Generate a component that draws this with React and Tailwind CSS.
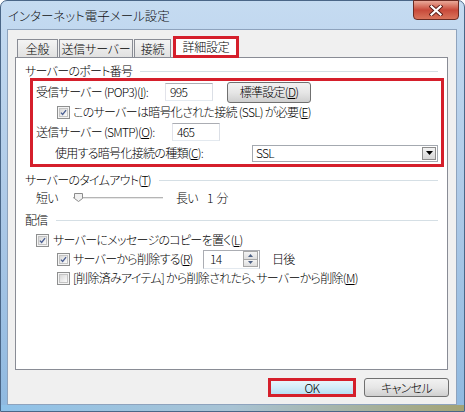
import React from "react";

const Check = ({ checked }) => (
  <div className="w-[13px] h-[13px] shrink-0 border border-[#8e8f8f] bg-[#f4f4f4] p-px">
    <div className="w-full h-full border border-[#c4c4c4] bg-gradient-to-br from-[#d8d8d8] to-[#fbfbfb] flex items-center justify-center">
      {checked && (
        <svg width="9" height="9" viewBox="0 0 9 9">
          <path d="M1.2 4.6 L3.4 7 L7.8 1.4" fill="none" stroke="#4a5e92" strokeWidth="1.7" />
        </svg>
      )}
    </div>
  </div>
);

const GroupLabel = ({ children, cls }) => (
  <div className={"flex items-center pl-[9px] pr-[9px] h-[14px] " + cls}>
    <span className="leading-[14px] whitespace-nowrap">{children}</span>
    <div className="flex-1 h-px bg-[#d5dfe5] ml-[8px]" />
  </div>
);

const TextBox = ({ value, cls }) => (
  <div className={"border border-[#abadb3] border-l-[#e2e3ea] border-r-[#dbdfe6] border-b-[#e3e9ef] bg-white flex items-center pl-[4px] text-[12px] leading-none " + cls}>
    {value}
  </div>
);

export default function App() {
  return (
    <div className="w-[465px] h-[412px] overflow-hidden font-['Noto_Sans_CJK_JP',sans-serif] font-light [font-feature-settings:'palt'] tracking-[-0.7px] text-[12px] text-black">
      <div className="w-[465px] h-[412px] rounded-t-[7px] border border-[#4a6687] bg-gradient-to-b from-[#c5dbf1] via-[#adc9e7] to-[#8fb9e0] flex flex-col">
        {/* title bar */}
        <div className="h-[28px] flex items-start justify-between shrink-0">
          <div className="pl-[7px] pt-[6px] text-[12.5px] leading-[18px] text-[#111] tracking-normal">インターネット電子メール設定</div>
          <div className="mr-[5px] -mt-px w-[46px] h-[20px] rounded-b-[4px] border border-[#6b2b23] bg-gradient-to-b from-[#e9a999] via-[#c8493a] to-[#d9745c] flex items-center justify-center">
            <svg width="14" height="11" viewBox="0 0 14 11">
              <path d="M2.5 1.5 L11.5 9.5 M11.5 1.5 L2.5 9.5" stroke="#5a1c16" strokeWidth="4" strokeLinecap="square" />
              <path d="M2.5 1.5 L11.5 9.5 M11.5 1.5 L2.5 9.5" stroke="#ffffff" strokeWidth="2.2" strokeLinecap="square" />
            </svg>
          </div>
        </div>
        {/* client */}
        <div className="ml-[6px] mr-[7px] h-[376px] border border-[#8ea3bd] bg-[#f0f0f0] flex flex-col shrink-0">
          {/* tabs */}
          <div className="flex items-end h-[27px] pl-[9px] relative z-10 tracking-[-0.2px]">
            <div className="w-[41px] h-[18px] border border-[#898c95] border-b-0 bg-gradient-to-b from-[#f4f4f4] to-[#e1e1e1] flex items-center justify-center leading-none">全般</div>
            <div className="ml-px w-[74px] h-[18px] border border-[#898c95] border-b-0 bg-gradient-to-b from-[#f4f4f4] to-[#e1e1e1] flex items-center justify-center leading-none">送信サーバー</div>
            <div className="ml-px w-[37px] h-[18px] border border-[#898c95] border-b-0 bg-gradient-to-b from-[#f4f4f4] to-[#e1e1e1] flex items-center justify-center leading-none">接続</div>
            <div className="ml-[2px] w-[66px] h-[22px] -mb-px border-[3px] border-[#d51f2b] bg-white flex items-center justify-center leading-none">詳細設定</div>
          </div>
          {/* panel */}
          <div className="ml-[7px] w-[433px] h-[313px] border border-[#898c95] bg-white flex flex-col">
            <GroupLabel cls="mt-[6px]">サーバーのポート番号</GroupLabel>
            <div className="ml-[14px] mr-[3px] h-[89px] border-[3px] border-[#d51f2b] flex flex-col">
              <div className="h-[22px] flex items-center pl-[3px]">
                <span className="w-[129px] whitespace-nowrap">受信サーバー (POP3)(<u>I</u>):</span>
                <TextBox value="995" cls="w-[48px] h-[18px]" />
                <div className="ml-[14px] w-[84px] h-[21px] rounded-[3px] border border-[#707070] bg-gradient-to-b from-[#f2f2f2] via-[#e6e6e6] to-[#cfcfcf] flex items-center justify-center leading-none">標準設定(<u>D</u>)</div>
              </div>
              <div className="h-[18px] flex items-center pl-[24px]">
                <Check checked />
                <span className="ml-[3px] whitespace-nowrap">このサーバーは暗号化された接続 (SSL) が必要(<u>E</u>)</span>
              </div>
              <div className="h-[21px] flex items-center pl-[3px]">
                <span className="w-[136px] whitespace-nowrap">送信サーバー (SMTP)(<u>O</u>):</span>
                <TextBox value="465" cls="w-[48px] h-[18px]" />
              </div>
              <div className="h-[22px] flex items-center pl-[22px]">
                <span className="w-[197px] whitespace-nowrap">使用する暗号化接続の種類(<u>C</u>):</span>
                <div className="w-[186px] h-[17px] border border-[#a4a9b0] bg-white flex items-center justify-between pl-[3px] pr-px">
                  <span className="leading-none">SSL</span>
                  <div className="w-[14px] h-[13px] border border-[#8d8d8d] bg-gradient-to-b from-[#f3f3f3] to-[#d6d6d6] flex items-center justify-center">
                    <svg width="7" height="4" viewBox="0 0 7 4"><path d="M0 0 H7 L3.5 4 Z" fill="#000" /></svg>
                  </div>
                </div>
              </div>
            </div>
            <GroupLabel cls="mt-[6px]">サーバーのタイムアウト(<u>T</u>)</GroupLabel>
            <div className="h-[22px] flex items-center pl-[20px]">
              <span>短い</span>
              <div className="ml-[15px] w-[90px] h-[12px] relative flex items-center">
                <div className="w-full h-[3px] border-t border-[#b5b5b5] border-b border-b-white bg-[#e7e7e7]" />
                <svg className="absolute left-0 top-0" width="13" height="11" viewBox="0 0 13 11">
                  <path d="M1.5 1.5 H9.5 V6.5 L5.5 9.5 L1.5 6.5 Z" fill="#f1f1f1" stroke="#8c8c8c" strokeWidth="1" />
                </svg>
              </div>
              <span className="ml-[13px]">長い</span>
              <span className="ml-[9px] whitespace-pre">1  分</span>
            </div>
            <GroupLabel cls="mt-[4px]">配信</GroupLabel>
            <div className="mt-[4px] h-[18px] flex items-center pl-[20px]">
              <Check checked />
              <span className="ml-[4px] whitespace-nowrap">サーバーにメッセージのコピーを置く(<u>L</u>)</span>
            </div>
            <div className="h-[20px] flex items-center pl-[41px]">
              <Check checked />
              <span className="ml-[3px] w-[130px] whitespace-nowrap">サーバーから削除する(<u>R</u>)</span>
              <div className="w-[57px] h-[19px] border border-[#abadb3] border-b-[#e3e9ef] bg-white flex items-center justify-between pl-[6px] pr-px">
                <span className="leading-none">14</span>
                <div className="w-[15px] h-[16px] flex flex-col">
                  <div className="flex-1 border border-[#a7a7a7] bg-gradient-to-b from-[#f4f4f4] to-[#dedede] flex items-center justify-center">
                    <svg width="5" height="3" viewBox="0 0 5 3"><path d="M0 3 H5 L2.5 0 Z" fill="#4d6185" /></svg>
                  </div>
                  <div className="flex-1 border border-t-0 border-[#a7a7a7] bg-gradient-to-b from-[#f4f4f4] to-[#dedede] flex items-center justify-center">
                    <svg width="5" height="3" viewBox="0 0 5 3"><path d="M0 0 H5 L2.5 3 Z" fill="#4d6185" /></svg>
                  </div>
                </div>
              </div>
              <span className="ml-[12px]">日後</span>
            </div>
            <div className="h-[18px] flex items-center pl-[41px]">
              <Check checked={false} />
              <span className="ml-[3px] whitespace-nowrap">[削除済みアイテム] から削除されたら、サーバーから削除(<u>M</u>)</span>
            </div>
          </div>
          {/* buttons */}
          <div className="mt-[8px] flex justify-end pr-[7px] gap-[8px]">
            <div className="w-[88px] h-[19px] border-[3px] border-[#d51f2b] bg-gradient-to-b from-[#e8f5fc] via-[#d2ecf9] to-[#b7dff4] flex items-center justify-center leading-none">OK</div>
            <div className="w-[85px] h-[19px] rounded-[3px] border border-[#707070] bg-gradient-to-b from-[#f2f2f2] via-[#e6e6e6] to-[#cfcfcf] flex items-center justify-center leading-none">キャンセル</div>
          </div>
        </div>
        <div className="flex-1 bg-gradient-to-r from-[#8fc2e9] via-[#a8c3d4] to-[#a3a374]" />
      </div>
    </div>
  );
}
